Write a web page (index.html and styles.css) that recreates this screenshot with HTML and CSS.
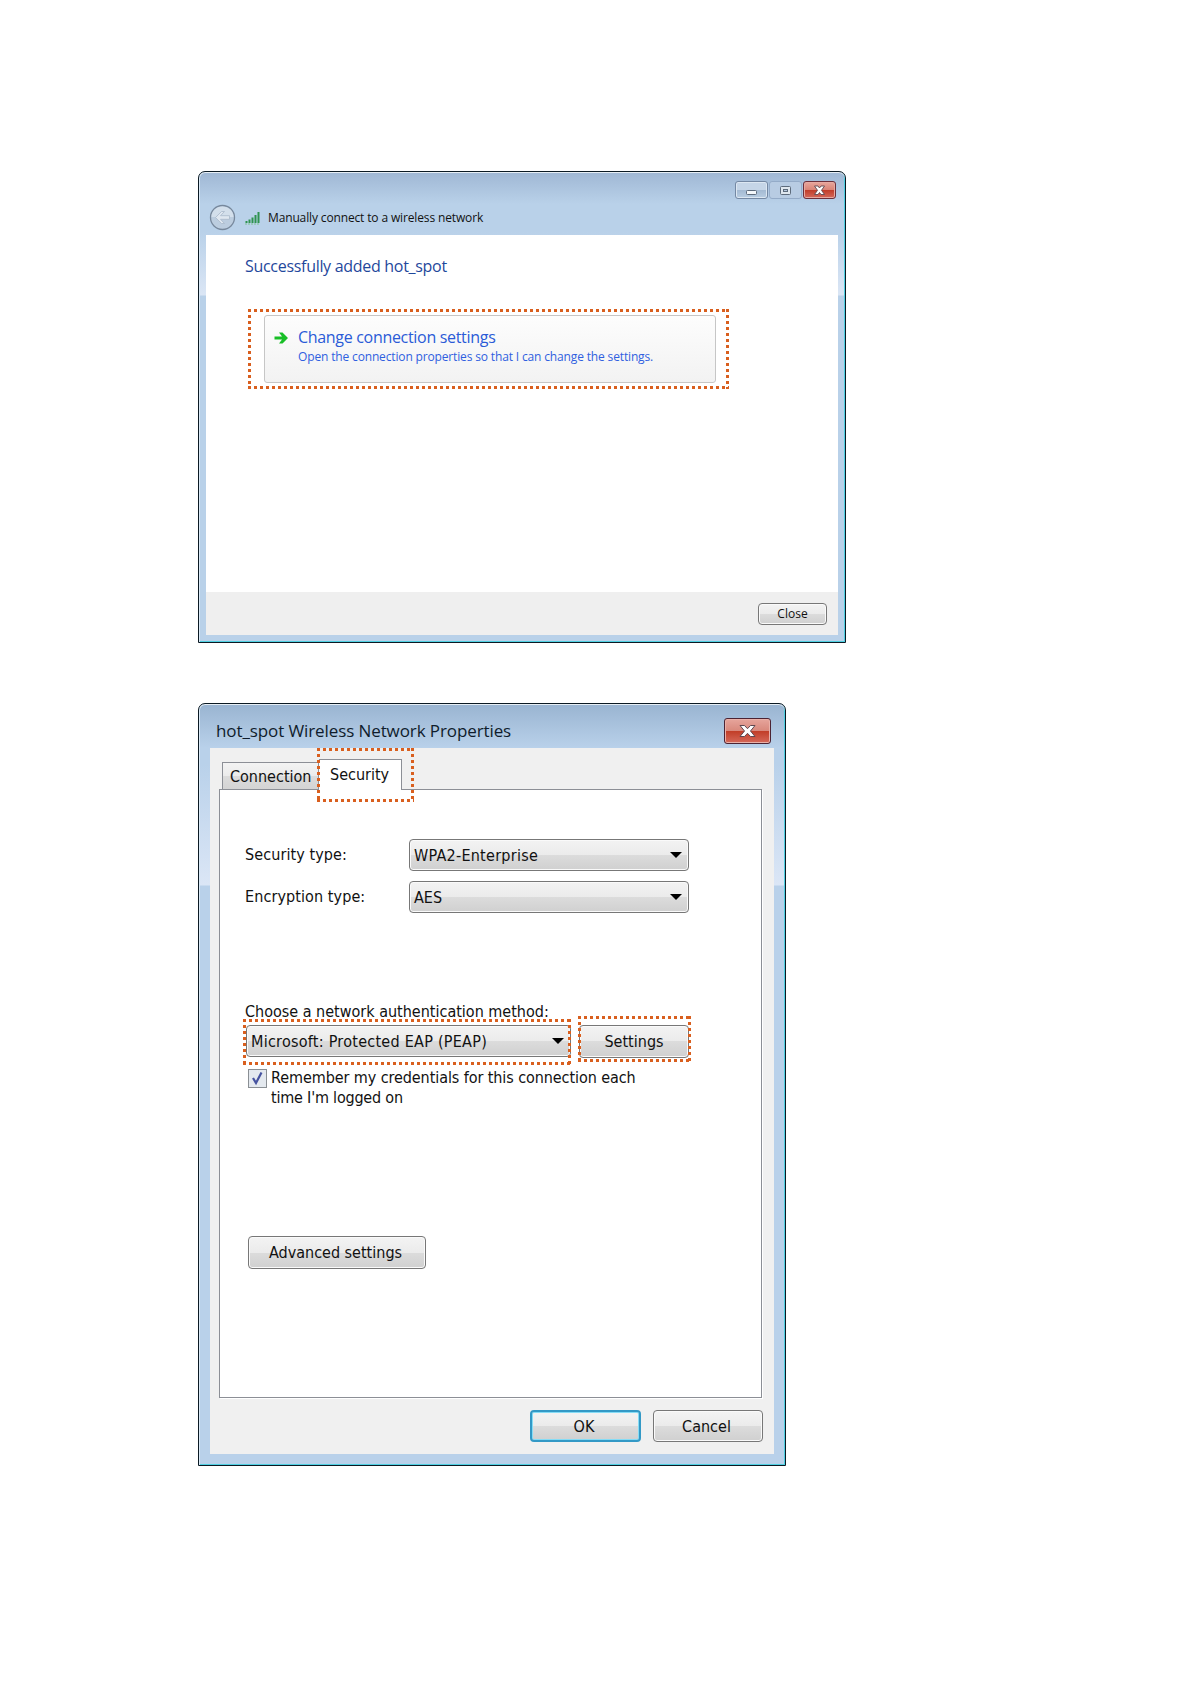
FILE: index.html
```html
<!DOCTYPE html>
<html lang="en">
<head>
    <meta charset="UTF-8">
    <title>Wireless network setup</title>
    <link rel="stylesheet" href="styles.css">
</head>
<body>
<div class="window wizard">
    <div class="caption">
        <div class="controls">
            <div class="ctl"><svg width="31" height="16"><rect x="10.5" y="8.5" width="10" height="4" rx="1" fill="#f4f7fa" stroke="#5d6b7c"/></svg></div>
            <div class="ctl ctl-off"><svg width="31" height="16"><rect x="10.5" y="4.5" width="10" height="8" rx="1" fill="#dfe7ef" stroke="#5d6b7c"/><rect x="13.5" y="7.5" width="4" height="2" fill="#b4c6dc" stroke="#5d6b7c"/></svg></div>
            <div class="ctl ctl-close"><svg width="31" height="16" viewBox="0 0 31 16"><path d="M10.500 4H14l1.500 2L17 4h3.500l-3 4.300 3 4.200H17l-1.500-2-1.500 2h-3.500l3-4.200z" fill="#fff" stroke="#5f4850" stroke-width=".9"/></svg></div>
        </div>
        <div class="nav">
            <svg class="back" width="27" height="27" viewBox="0 0 27 27">
                <circle cx="13.500" cy="13.500" r="12" fill="#bccddf" stroke="#77889c" stroke-width="1.300"/>
                <path d="M2.500 13a11 10.500 0 0 1 22 0z" fill="#d3dfeb"/>
                <path d="M6.500 13.500l6-6h3l-4 4.200h9v3.600h-9l4 4.200h-3z" fill="#dfe7f0" stroke="#a9b9ca" stroke-width=".8"/>
            </svg>
            <svg class="signal" width="16" height="14" viewBox="0 0 16 14">
                <path d="M1.500 12V10M4.500 12V8.500M7.500 12V6.500M10.500 12V4M13.500 12V1" stroke="#2f9350" stroke-width="2"/>
                <path d="M0 13h15" stroke="#7fbf93" stroke-dasharray="2 1"/>
            </svg>
            <span class="nav-title">Manually connect to a wireless network</span>
        </div>
    </div>
    <div class="wizard-body">
        <div class="heading">Successfully added hot_spot</div>
        <div class="command">
            <svg class="go" width="16" height="14" viewBox="0 0 16 14">
                <path d="M1.500 5.500h7.500L6 1.500h3.500L15 7l-5.500 5.500H6l3-4H1.500z" fill="#18bf26"/>
            </svg>
            <div class="command-text">
                <span class="command-title">Change connection settings</span>
                <span class="command-note">Open the connection properties so that I can change the settings.</span>
            </div>
            <div class="mark mark-command"></div>
        </div>
    </div>
    <div class="wizard-footer">
        <div class="btn btn-small">Close</div>
    </div>
</div>

<div class="window props">
    <div class="props-caption">
        <span class="props-title">hot_spot Wireless Network Properties</span>
        <div class="props-close"><svg width="45" height="24" viewBox="0 0 45 24"><path d="M15 6.500h4.500l3 3.200 3-3.200H30L25.500 12l4.500 5.500h-4.500l-3-3.200-3 3.200H15l4.500-5.500z" fill="#fff" stroke="#5f4850"/></svg></div>
    </div>
    <div class="props-body">
        <div class="tabs">
            <div class="tab">Connection</div>
            <div class="tab tab-active">Security
                <div class="mark mark-tab"></div>
            </div>
        </div>
        <div class="panel">
            <div class="field">
                <span class="label">Security type:</span>
                <div class="combo"><span class="value">WPA2-Enterprise</span><i class="caret"></i></div>
            </div>
            <div class="field">
                <span class="label">Encryption type:</span>
                <div class="combo"><span>AES</span><i class="caret"></i></div>
            </div>
            <div class="method-label">Choose a network authentication method:</div>
            <div class="method">
                <div class="combo combo-method"><span class="value">Microsoft: Protected EAP (PEAP)</span><i class="caret"></i>
                    <div class="mark mark-method"></div>
                </div>
                <div class="btn btn-settings">Settings
                    <div class="mark mark-settings"></div>
                </div>
            </div>
            <div class="remember">
                <div class="check"><svg width="15" height="15" viewBox="0 0 15 15"><path d="M3 7l3 5L11.500 1.500" fill="none" stroke="#4653a0" stroke-width="2.200"/></svg></div>
                <div class="remember-text">Remember my credentials for this connection each<br><span class="remember-end">time I'm logged on</span></div>
            </div>
            <div class="btn btn-advanced">Advanced settings</div>
        </div>
        <div class="actions">
            <div class="btn btn-default">OK</div>
            <div class="btn btn-cancel">Cancel</div>
        </div>
    </div>
</div>
</body>
</html>
```

FILE: styles.css
```css
body { margin: 0; padding: 171px 0 0 198px; width: 993px; height: 1513px; box-sizing: border-box; background: #fff; color: #111; font-family: "DejaVu Sans Condensed", "DejaVu Sans", sans-serif; white-space: nowrap; }
svg { display: block; }
.window { box-sizing: border-box; display: flex; flex-direction: column; border: 1px solid #0b1a24; border-radius: 7px 7px 0 0; box-shadow: inset 0 1px #e6eef5, inset 1px 0 #d8e8f5, inset -1px -1px #4fd0e2; }

/* wizard window */
.wizard { width: 648px; height: 472px; padding: 0 7px 7px; font-family: "Open Sans", sans-serif; background: linear-gradient(#9fb7d4, #b9d1e9 32px, #b9d1e9 60px, #dbe6f5 123px, #b9d1e9 124px); }
.caption { height: 63px; }
.controls { display: flex; justify-content: flex-end; gap: 1px; padding: 9px 2px 0 0; }
.ctl { width: 31px; height: 16px; border: 1px solid #7488a3; border-radius: 3px; background: linear-gradient(#c5d5e7 50%, #a3b9d2 50%, #b9cde2); box-shadow: inset 0 0 0 1px #dce7f2; }
.ctl-off { border-color: #94abc8; background: #b8cce3; box-shadow: none; }
.ctl-close { border-color: #6c2f3a; background: linear-gradient(#e8a79d, #d98375 50%, #c03c28 50%, #d4695b); box-shadow: inset 0 0 0 1px #e7aaa2; }
.nav { display: flex; align-items: center; margin: 5px 0 0 3px; height: 27px; }
.signal { margin-left: 9px; }
.nav-title { margin-left: 7px; font-size: 12px; letter-spacing: -.14px; }
.wizard-body { flex: 1; background: #fff; padding: 19px 0 0 39px; }
.heading { color: #1f489c; font-size: 16px; line-height: 24px; height: 61px; letter-spacing: -.3px; }
.command { position: relative; box-sizing: border-box; width: 452px; height: 68px; margin-left: 19px; border: 1px solid #c6c6c6; border-radius: 3px; background: linear-gradient(#fdfdfd, #f2f2f2); display: flex; padding: 10px 0 0 8px; }
.go { margin: 5px 9px 0 0; }
.command-text { display: flex; flex-direction: column; color: #2a5bd7; }
.command-title { font-size: 16px; line-height: 22px; letter-spacing: -.31px; }
.command-note { font-size: 12px; line-height: 18px; letter-spacing: -.15px; color: #2f5fe0; }
.wizard-footer { height: 43px; background: #efefef; display: flex; justify-content: flex-end; padding: 11px 11px 0 0; box-sizing: border-box; }

/* buttons and combo boxes */
.btn, .combo { position: relative; box-sizing: border-box; display: flex; align-items: center; justify-content: center; border: 1px solid #777; border-radius: 4px; background: linear-gradient(#f3f3f3, #ebebeb 50%, #dcdcdc 50%, #d0d0d0); box-shadow: inset 0 0 0 1px #fafafa; font-size: 16px; }
.btn-small { width: 69px; height: 22px; padding-bottom: 2px; font-size: 12px; }
.combo { width: 280px; height: 32px; justify-content: flex-start; padding-left: 4px; }
.value { letter-spacing: .26px; }
.caret { margin: 0 6px 0 auto; border: 6px solid transparent; border-top-color: #000; border-bottom: 0; }

/* properties window */
.props { width: 588px; height: 763px; margin-top: 60px; padding: 0 11px 11px; background: linear-gradient(#99b4d1, #b9d1ea 44px, #b9d1ea 60px, #dbe6f6 181px, #b9d1ea 182px); }
.props-caption { height: 44px; display: flex; justify-content: space-between; padding: 0 3px 0 6px; }
.props-title { font-size: 17px; line-height: 54px; letter-spacing: -.1px; font-family: "Open Sans", sans-serif; color: #0f1c2c; }
.props-close { width: 45px; height: 24px; margin-top: 14px; border: 1px solid #4c2333; border-radius: 3px; background: linear-gradient(#e6a59c, #d8887c 50%, #c13d27 50%, #d5695a); box-shadow: inset 0 0 0 1px #eab1a9; }
.props-body { flex: 1; background: #f0f0f0; padding: 11px 11px 0 9px; }
.tabs { display: flex; align-items: flex-end; height: 30px; padding-left: 3px; font-size: 16px; }
.tab { box-sizing: border-box; width: 97px; height: 27px; padding: 4px 0 0 7px; border: 1px solid #8c8f96; border-bottom: 0; background: linear-gradient(#f3f3f3, #ebebeb 50%, #dcdcdc 50%, #d4d4d4); }
.tab-active { position: relative; width: 83px; height: 31px; margin-bottom: -1px; padding: 5px 0 0 11px; border-left: 0; background: #fff; z-index: 1; }
.panel { box-sizing: border-box; height: 609px; width: 543px; padding: 49px 0 0 25px; border: 1px solid #8c8f96; background: #fff; box-shadow: 1px 1px #fff; font-size: 16px; }
.field { display: flex; align-items: center; margin-bottom: 10px; }
.label { width: 164px; padding-bottom: 1px; letter-spacing: .09px; }
.method-label { margin-top: 90px; height: 22px; line-height: 18px; }
.method { display: flex; margin-left: 1px; }
.combo-method { width: 325px; }
.btn-settings { width: 110px; height: 33px; margin-left: 8px; }
.remember { display: flex; margin-top: 10px; line-height: 20px; }
.check { width: 15px; height: 15px; margin: 1px 4px 0 3px; padding: 1px; border: 1px solid #8a8f94; background: #e4e9ef; }
.remember-text { letter-spacing: -.08px; }
.remember-end { letter-spacing: -.2px; }
.btn-advanced { width: 178px; height: 33px; margin: 128px 0 0 3px; padding-right: 3px; }
.actions { display: flex; justify-content: flex-end; gap: 12px; margin-top: 12px; }
.actions .btn { width: 111px; height: 32px; }
.actions .btn-default { border: 2px solid #3399c6; box-shadow: inset 0 0 0 1px #86dcf5; padding-right: 3px; }
.actions .btn-cancel { width: 110px; padding-right: 3px; }

/* dotted callouts around the controls to use */
.mark {
    position: absolute;
    --h: repeating-linear-gradient(90deg, #d95f1e 0 3px, transparent 3px 6px);
    --v: repeating-linear-gradient(#d95f1e 0 3px, transparent 3px 6px);
    background: var(--h) top / 100% 3px no-repeat, var(--h) bottom / 100% 3px no-repeat, var(--v) left / 3px 100% no-repeat, var(--v) right / 3px 100% no-repeat;
}
.mark-command { left: -17px; top: -7px; width: 481px; height: 80px; }
.mark-tab { left: -2px; top: -12px; width: 97px; height: 54px; }
.mark-method { left: -4px; top: -7px; width: 328px; height: 46px; }
.mark-settings { left: -2px; top: -10px; width: 113px; height: 46px; }
```
